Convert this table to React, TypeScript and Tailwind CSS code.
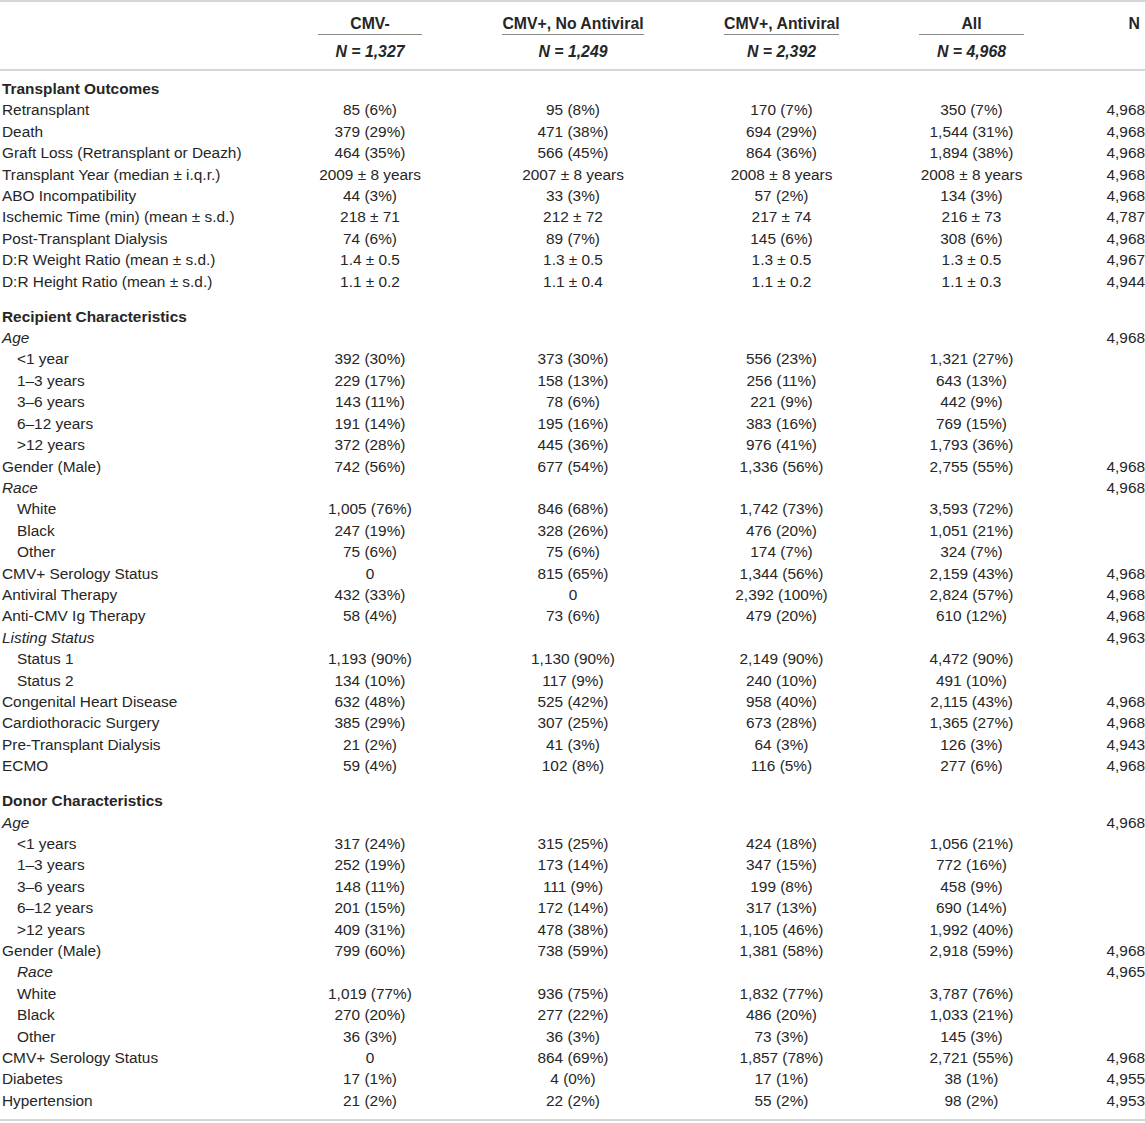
import React from "react";

type Row = {
  label: string;
  vals?: string[];
  n?: string;
  indent?: boolean;
  italic?: boolean;
};

type Section = { title: string; rows: Row[] };

const cols = [
  { name: "CMV-", n: "N = 1,327" },
  { name: "CMV+, No Antiviral", n: "N = 1,249" },
  { name: "CMV+, Antiviral", n: "N = 2,392" },
  { name: "All", n: "N = 4,968" },
];

const sections: Section[] = [
  {
    title: "Transplant Outcomes",
    rows: [
      { label: "Retransplant", vals: ["85 (6%)", "95 (8%)", "170 (7%)", "350 (7%)"], n: "4,968" },
      { label: "Death", vals: ["379 (29%)", "471 (38%)", "694 (29%)", "1,544 (31%)"], n: "4,968" },
      { label: "Graft Loss (Retransplant or Deazh)", vals: ["464 (35%)", "566 (45%)", "864 (36%)", "1,894 (38%)"], n: "4,968" },
      { label: "Transplant Year (median ± i.q.r.)", vals: ["2009 ± 8 years", "2007 ± 8 years", "2008 ± 8 years", "2008 ± 8 years"], n: "4,968" },
      { label: "ABO Incompatibility", vals: ["44 (3%)", "33 (3%)", "57 (2%)", "134 (3%)"], n: "4,968" },
      { label: "Ischemic Time (min) (mean ± s.d.)", vals: ["218 ± 71", "212 ± 72", "217 ± 74", "216 ± 73"], n: "4,787" },
      { label: "Post-Transplant Dialysis", vals: ["74 (6%)", "89 (7%)", "145 (6%)", "308 (6%)"], n: "4,968" },
      { label: "D:R Weight Ratio (mean ± s.d.)", vals: ["1.4 ± 0.5", "1.3 ± 0.5", "1.3 ± 0.5", "1.3 ± 0.5"], n: "4,967" },
      { label: "D:R Height Ratio (mean ± s.d.)", vals: ["1.1 ± 0.2", "1.1 ± 0.4", "1.1 ± 0.2", "1.1 ± 0.3"], n: "4,944" },
    ],
  },
  {
    title: "Recipient Characteristics",
    rows: [
      { label: "Age", italic: true, n: "4,968" },
      { label: "<1 year", indent: true, vals: ["392 (30%)", "373 (30%)", "556 (23%)", "1,321 (27%)"] },
      { label: "1–3 years", indent: true, vals: ["229 (17%)", "158 (13%)", "256 (11%)", "643 (13%)"] },
      { label: "3–6 years", indent: true, vals: ["143 (11%)", "78 (6%)", "221 (9%)", "442 (9%)"] },
      { label: "6–12 years", indent: true, vals: ["191 (14%)", "195 (16%)", "383 (16%)", "769 (15%)"] },
      { label: ">12 years", indent: true, vals: ["372 (28%)", "445 (36%)", "976 (41%)", "1,793 (36%)"] },
      { label: "Gender (Male)", vals: ["742 (56%)", "677 (54%)", "1,336 (56%)", "2,755 (55%)"], n: "4,968" },
      { label: "Race", italic: true, n: "4,968" },
      { label: "White", indent: true, vals: ["1,005 (76%)", "846 (68%)", "1,742 (73%)", "3,593 (72%)"] },
      { label: "Black", indent: true, vals: ["247 (19%)", "328 (26%)", "476 (20%)", "1,051 (21%)"] },
      { label: "Other", indent: true, vals: ["75 (6%)", "75 (6%)", "174 (7%)", "324 (7%)"] },
      { label: "CMV+ Serology Status", vals: ["0", "815 (65%)", "1,344 (56%)", "2,159 (43%)"], n: "4,968" },
      { label: "Antiviral Therapy", vals: ["432 (33%)", "0", "2,392 (100%)", "2,824 (57%)"], n: "4,968" },
      { label: "Anti-CMV Ig Therapy", vals: ["58 (4%)", "73 (6%)", "479 (20%)", "610 (12%)"], n: "4,968" },
      { label: "Listing Status", italic: true, n: "4,963" },
      { label: "Status 1", indent: true, vals: ["1,193 (90%)", "1,130 (90%)", "2,149 (90%)", "4,472 (90%)"] },
      { label: "Status 2", indent: true, vals: ["134 (10%)", "117 (9%)", "240 (10%)", "491 (10%)"] },
      { label: "Congenital Heart Disease", vals: ["632 (48%)", "525 (42%)", "958 (40%)", "2,115 (43%)"], n: "4,968" },
      { label: "Cardiothoracic Surgery", vals: ["385 (29%)", "307 (25%)", "673 (28%)", "1,365 (27%)"], n: "4,968" },
      { label: "Pre-Transplant Dialysis", vals: ["21 (2%)", "41 (3%)", "64 (3%)", "126 (3%)"], n: "4,943" },
      { label: "ECMO", vals: ["59 (4%)", "102 (8%)", "116 (5%)", "277 (6%)"], n: "4,968" },
    ],
  },
  {
    title: "Donor Characteristics",
    rows: [
      { label: "Age", italic: true, n: "4,968" },
      { label: "<1 years", indent: true, vals: ["317 (24%)", "315 (25%)", "424 (18%)", "1,056 (21%)"] },
      { label: "1–3 years", indent: true, vals: ["252 (19%)", "173 (14%)", "347 (15%)", "772 (16%)"] },
      { label: "3–6 years", indent: true, vals: ["148 (11%)", "111 (9%)", "199 (8%)", "458 (9%)"] },
      { label: "6–12 years", indent: true, vals: ["201 (15%)", "172 (14%)", "317 (13%)", "690 (14%)"] },
      { label: ">12 years", indent: true, vals: ["409 (31%)", "478 (38%)", "1,105 (46%)", "1,992 (40%)"] },
      { label: "Gender (Male)", vals: ["799 (60%)", "738 (59%)", "1,381 (58%)", "2,918 (59%)"], n: "4,968" },
      { label: "Race", italic: true, indent: true, n: "4,965" },
      { label: "White", indent: true, vals: ["1,019 (77%)", "936 (75%)", "1,832 (77%)", "3,787 (76%)"] },
      { label: "Black", indent: true, vals: ["270 (20%)", "277 (22%)", "486 (20%)", "1,033 (21%)"] },
      { label: "Other", indent: true, vals: ["36 (3%)", "36 (3%)", "73 (3%)", "145 (3%)"] },
      { label: "CMV+ Serology Status", vals: ["0", "864 (69%)", "1,857 (78%)", "2,721 (55%)"], n: "4,968" },
      { label: "Diabetes", vals: ["17 (1%)", "4 (0%)", "17 (1%)", "38 (1%)"], n: "4,955" },
      { label: "Hypertension", vals: ["21 (2%)", "22 (2%)", "55 (2%)", "98 (2%)"], n: "4,953" },
    ],
  },
];

const grid =
  "grid grid-cols-[238px_104px_142px_115px_105px_1fr] gap-x-[80px]";

export default function App() {
  return (
    <div
      className="w-[1145px] bg-white text-[#262626] text-[15.4px]"
      style={{ fontFamily: '"Liberation Sans", Arial, sans-serif' }}
    >
      <div className="border-t-2 border-[#d6d6d6]">
        {/* header: column names */}
        <div className={`${grid} font-bold text-[15.8px]`}>
          <div />
          {cols.map((c) => (
            <div
              key={c.name}
              className="pt-[12px] leading-[20px] text-center whitespace-nowrap border-b border-[#8a8a8a]"
            >
              {c.name}
            </div>
          ))}
          <div className="pt-[12px] leading-[20px] text-right pr-[5px]">N</div>
        </div>
        {/* header: counts */}
        <div className={`${grid} font-bold italic text-[15.8px] border-b-2 border-[#d6d6d6]`}>
          <div />
          {cols.map((c) => (
            <div
              key={c.n}
              className="py-[7px] leading-[20px] text-center whitespace-nowrap"
            >
              {c.n}
            </div>
          ))}
          <div />
        </div>
      </div>

      <div className="border-b-2 border-[#d6d6d6] pb-[8px]">
        {sections.map((s, si) => (
          <div key={s.title} className={si === 0 ? "pt-[7px]" : "pt-[13.6px]"}>
            <div className="font-bold leading-[21.4px] pl-[2px]">{s.title}</div>
            {s.rows.map((r, ri) => (
              <div key={ri} className={`${grid} leading-[21.4px]`}>
                <div
                  className={`whitespace-nowrap ${r.indent ? "pl-[17px]" : "pl-[2px]"} ${
                    r.italic ? "italic" : ""
                  }`}
                >
                  {r.label}
                </div>
                {[0, 1, 2, 3].map((i) => (
                  <div key={i} className="text-center whitespace-nowrap">
                    {r.vals ? r.vals[i] : ""}
                  </div>
                ))}
                <div className="text-right whitespace-nowrap">{r.n ?? ""}</div>
              </div>
            ))}
          </div>
        ))}
      </div>
    </div>
  );
}
